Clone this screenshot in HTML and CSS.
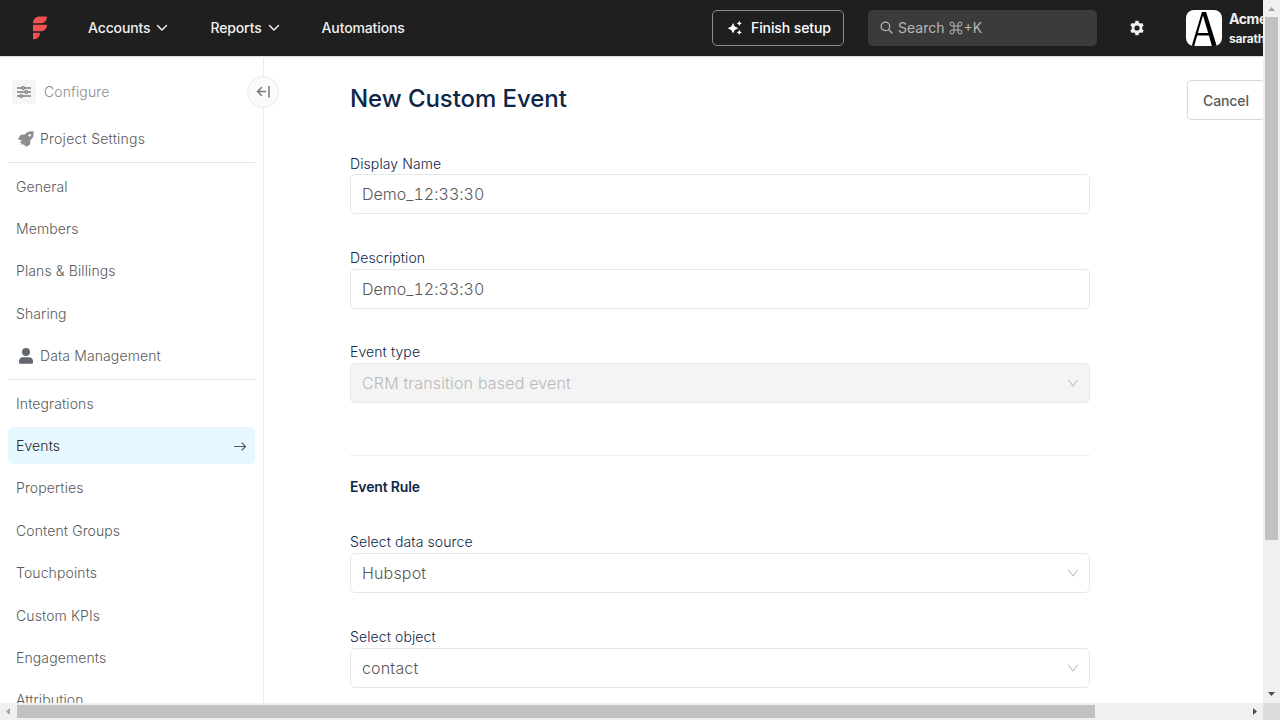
FILE: index.html
```html
<!DOCTYPE html>
<html lang="en">
<head>
<meta charset="utf-8">
<title>New Custom Event</title>
<link rel="stylesheet" href="styles.css">
</head>
<body>
<div class="window">
  <div class="page">
    <header class="topbar">
      <svg class="logo" width="14" height="24" viewBox="0 0 14 24"><path fill="#ee5253" d="M0 7.300C0 3 3 .5 7 .5h7C14 4.500 11.500 7.300 8 7.300zM0 8.700h14c0 4-2.500 6.500-6.500 6.500H0zM0 16.700h7c0 4.300-3 6.600-7 6.600z"/></svg>
      <nav class="nav">
        <a class="nav-item">Accounts<svg width="12" height="8" viewBox="0 0 12 8"><path d="M1.500 1.500 6 6l4.500-4.500"/></svg></a>
        <a class="nav-item">Reports<svg width="12" height="8" viewBox="0 0 12 8"><path d="M1.500 1.500 6 6l4.500-4.500"/></svg></a>
        <a class="nav-item">Automations</a>
      </nav>
      <a class="finish"><svg width="16" height="16" viewBox="0 0 16 16"><path fill="#fff" d="M6 3l1.700 3.600L11.300 8.300 7.700 10 6 13.600 4.300 10 .7 8.300l3.600-1.700zM12.300.8l.8 1.800 1.800.8-1.800.8-.8 1.800-.8-1.800-1.800-.8 1.800-.8zM12.300 9.800l.8 1.800 1.800.8-1.800.8-.8 1.800-.8-1.800-1.800-.8 1.800-.8z"/></svg>Finish setup</a>
      <div class="search"><svg width="13" height="13" viewBox="0 0 13 13"><circle cx="5.400" cy="5.400" r="4.300"/><path d="M8.500 8.500 12 12"/></svg>Search <svg class="cmd" width="14" height="14" viewBox="0 0 14 14"><path d="M5 5V3a2 2 0 1 0-2 2h8a2 2 0 1 0-2-2v8a2 2 0 1 0 2-2H3a2 2 0 1 0 2 2z"/></svg>+K</div>
      <svg class="gear" width="16" height="16" viewBox="0 0 16 16"><path fill="#f0f0f0" fill-rule="evenodd" d="M6.500.8h3l.4 2 1.400.8 1.900-.7 1.500 2.600-1.500 1.300v2.400l1.500 1.300-1.500 2.600-1.900-.7-1.400.8-.4 2h-3l-.4-2-1.400-.8-1.900.7-1.500-2.600 1.500-1.300V6.800L1.300 5.500l1.500-2.600 1.900.7 1.400-.8zM8 5.400a2.600 2.600 0 1 0 0 5.200 2.600 2.600 0 0 0 0-5.200z"/></svg>
      <div class="avatar"><span>A</span></div>
      <div class="account"><div class="org">Acme</div><div class="mail">sarath</div></div>
    </header>
    <div class="body">
      <aside class="sidebar">
        <div class="configure"><span class="configure-icon"><svg width="14" height="14" viewBox="0 0 14 14"><path d="M.5 3h4.200M7.800 3h5.700M.5 7h7.200M10.800 7h2.700M.5 11h2.200M5.800 11h7.700"/><circle cx="6.200" cy="3" r="1.300"/><circle cx="9.300" cy="7" r="1.300"/><circle cx="4.200" cy="11" r="1.300"/></svg></span>Configure</div>
        <a class="collapse"><svg width="14" height="12" viewBox="0 0 14 12"><path d="M9.500 5.500H1.500M5.500 1.500l-4 4 4 4M13 .5v10.500"/></svg></a>
        <div class="menu">
          <div class="group project"><svg width="16" height="16" viewBox="0 0 16 16"><path fill="#8b8c8e" d="M15.600.4C11.500 0 9 1 6.900 3.600l-3.600.2C2.200 4 1.400 5.800.3 7.900c-.2.600.1.900.7.900l3 .1 3.200 3.200.1 3c0 .6.400.9.900.6 2.200-1.100 3.800-2 4-3l.1-3.500c2.700-2.100 3.700-4.700 3.300-8.800z"/><path fill="#8b8c8e" d="M4 8.800l-2 2.400 1.500.8-.3 1.700 1.900-.5 2.100 1.500V12z"/><circle cx="11.700" cy="4.300" r="1.200" fill="#fff"/></svg>Project Settings</div>
          <div class="rule"></div>
          <a class="item">General</a>
          <a class="item">Members</a>
          <a class="item">Plans &amp; Billings</a>
          <a class="item">Sharing</a>
          <div class="group"><svg width="16" height="16" viewBox="0 0 16 16"><circle cx="8" cy="4" r="4" fill="#63686f"/><path fill="#63686f" d="M1 13.500c0-2.700 1.300-4.300 4-4.300h6c2.700 0 4 1.600 4 4.300v.8c0 1-.5 1.500-1.500 1.500h-11C1.500 15.800 1 15.300 1 14.300z"/></svg>Data Management</div>
          <div class="rule"></div>
          <a class="item">Integrations</a>
          <a class="item active">Events<svg width="14" height="12" viewBox="0 0 14 12"><path d="M1.500 6.500h11M9 3l3.500 3.500L9 10"/></svg></a>
          <a class="item">Properties</a>
          <a class="item">Content Groups</a>
          <a class="item">Touchpoints</a>
          <a class="item">Custom KPIs</a>
          <a class="item">Engagements</a>
          <a class="item">Attribution</a>
        </div>
      </aside>
      <main class="main">
        <div class="form">
          <h1>New Custom Event</h1>
          <div class="field"><label>Display Name</label><div class="control value">Demo_12:33:30</div></div>
          <div class="field"><label>Description</label><div class="control value">Demo_12:33:30</div></div>
          <div class="field"><label>Event type</label><div class="control disabled">CRM transition based event<svg width="12" height="10" viewBox="0 0 12 10"><path d="M1.500 2 6 8l4.500-6"/></svg></div></div>
          <div class="divider"></div>
          <h2>Event Rule</h2>
          <div class="field"><label>Select data source</label><div class="control">Hubspot<svg width="12" height="10" viewBox="0 0 12 10"><path d="M1.500 2 6 8l4.500-6"/></svg></div></div>
          <div class="field"><label>Select object</label><div class="control">contact<svg width="12" height="10" viewBox="0 0 12 10"><path d="M1.500 2 6 8l4.500-6"/></svg></div></div>
        </div>
        <a class="cancel">Cancel</a>
      </main>
    </div>
  </div>
  <div class="vbar"><svg width="17" height="17" viewBox="0 0 17 17"><path fill="#a3a3a3" d="M5 11h7L8.500 7z"/></svg><div class="vthumb"></div><svg class="end" width="17" height="17" viewBox="0 0 17 17"><path fill="#505050" d="M5 6h7l-3.500 4z"/></svg></div>
  <div class="hbar"><svg width="17" height="17" viewBox="0 0 17 17"><path fill="#a3a3a3" d="M10 5v7L6 8.500z"/></svg><div class="hthumb"></div><svg class="end" width="17" height="17" viewBox="0 0 17 17"><path fill="#505050" d="M7 5v7l4-3.500z"/></svg></div>
  <div class="corner"></div>
</div>
</body>
</html>
```

FILE: styles.css
```css
* { box-sizing: border-box; }
body { margin: 0; font-family: Inter, "Liberation Sans", sans-serif; font-size: 14px; font-weight: 300; color: #3e516c; }
svg { flex: none; }
path:not([fill]), circle:not([fill]) { fill: none; stroke-linecap: round; stroke-linejoin: round; }
.window { display: grid; grid-template-columns: 1263px 17px; grid-template-rows: 703px 17px; width: 1280px; height: 720px; overflow: hidden; }
.page { display: flex; flex-direction: column; overflow: hidden; background: #fff; }

.topbar { display: flex; align-items: center; flex: none; height: 56px; padding-left: 33px; background: #1f1f1f; color: #f0f0f0; box-shadow: 0 1px 1px #dedede; white-space: nowrap; }
.nav { display: flex; flex: none; align-items: center; gap: 42px; width: 624px; margin-left: 41px; padding-bottom: 1px; font-weight: 500; letter-spacing: -.13px; line-height: 18px; }
.nav-item { display: flex; align-items: center; gap: 6px; }
.nav-item path { stroke: #f0f0f0; stroke-width: 1.5; }
.finish { display: flex; align-items: center; gap: 8px; flex: none; width: 132px; height: 36px; padding: 0 0 1px 14px; border: 1px solid #8c8c8c; border-radius: 5px; color: #fff; font-weight: 500; letter-spacing: -.1px; }
.search { display: flex; align-items: center; flex: none; width: 229px; height: 36px; margin-left: 24px; padding: 0 0 1px 12px; border-radius: 5px; background: #3b3b3b; color: #b7b7b7; font-weight: 400; }
.search svg { margin-right: 5px; }
.search path, .search circle { stroke: #b7b7b7; stroke-width: 1.2; }
.search .cmd { margin: 0 0 0 5px; }
.search .cmd path { stroke-width: 1; }
.gear { margin-left: 32px; }
.avatar { display: flex; align-items: center; justify-content: center; flex: none; width: 36px; height: 36px; margin-left: 41px; overflow: hidden; border-radius: 8px; background: #fff; color: #000; font: 54px/36px "Liberation Serif", serif; }
.avatar span { padding-top: 3px; transform: scaleX(.84); }
.account { margin-left: 7px; font-size: 14px; line-height: 20px; font-weight: 700; letter-spacing: -.4px; }
.mail { font-size: 12px; line-height: 19px; letter-spacing: -.2px; }

.body { display: flex; flex: 1; min-height: 0; }
.sidebar { position: relative; flex: none; width: 264px; padding: 24px 8px 0; border-right: 1px solid #ececee; color: #595959; letter-spacing: .11px; }
.configure { display: flex; align-items: center; gap: 8px; height: 24px; margin-left: 4px; color: #8c8c8c; line-height: 22px; }
.configure-icon { display: flex; align-items: center; justify-content: center; width: 24px; height: 24px; border-radius: 4px; background: #f5f5f5; }
.configure path, .configure circle { stroke: #7d7d7d; stroke-width: 1.3; }
.collapse { position: absolute; top: 20px; right: -16px; display: flex; align-items: center; justify-content: center; width: 32px; height: 32px; border: 1px solid #ececec; border-radius: 50%; background: #fafafa; }
.collapse path { stroke: #777; stroke-width: 1.5; }
.menu { display: flex; flex-direction: column; gap: 4.8px; margin-top: 15.800px; }
.group, .item { display: flex; align-items: center; flex: none; height: 37.600px; padding: 0 8px; border-radius: 5px; }
.group { gap: 6px; padding-left: 10px; }
.project { letter-spacing: .24px; }
.item { justify-content: space-between; }
.rule { flex: none; height: 1px; margin-bottom: -.7px; background: #e3e3e6; }
.active { background: #e6f7ff; color: #262626; }
.active path { stroke: #595959; stroke-width: 1.1; }

.main { display: flex; align-items: flex-start; gap: 97px; padding: 24px 0 0 86px; }
.form { flex: none; width: 740px; }
h1 { height: 38px; margin: 0 0 34.700px; color: #0e2647; font-size: 24px; line-height: 37px; font-weight: 500; letter-spacing: -.06px; }
.field { margin-bottom: 32.600px; }
label { display: block; height: 21.800px; color: #0e2647; line-height: 21px; letter-spacing: .1px; }
.control { display: flex; align-items: center; justify-content: space-between; height: 40px; padding: 0 10px 0 11px; border: 1px solid #e5e7eb; border-radius: 5px; color: #595959; font-size: 16px; letter-spacing: .17px; }
.value { font-variant-numeric: tabular-nums; letter-spacing: .02px; }
.control path { stroke: #bfbfbf; stroke-width: 1.1; }
.disabled { background: #f4f4f4; color: #b9b9b9; }
.divider { height: 1px; margin: 52px 0 20px; background: #f0f0f0; }
h2 { margin: 0 0 33.200px; color: #0e2647; font-size: 14px; line-height: 22px; font-weight: 600; letter-spacing: -.15px; }
.cancel { flex: none; width: 78px; height: 40px; padding-left: 15px; border: 1px solid #d9d9d9; border-radius: 4px; color: #595959; font-weight: 500; line-height: 40px; letter-spacing: -.1px; }

.vbar, .hbar { display: flex; background: #f0f0f0; }
.vbar { flex-direction: column; }
.vthumb { width: 13px; height: 523px; margin-left: 2px; background: #c1c1c1; }
.hthumb { width: 1078px; height: 13px; margin-top: 2px; background: #c1c1c1; }
.vbar .end { margin-top: auto; }
.hbar .end { margin-left: auto; }
.corner { background: #dcdcdc; }
```
